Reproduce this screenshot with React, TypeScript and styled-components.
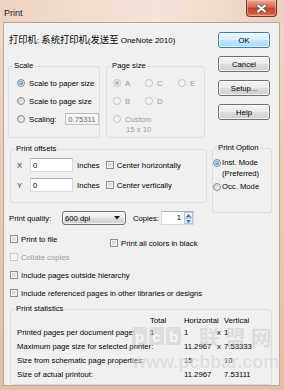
import React from "react";
import styled, { createGlobalStyle } from "styled-components";

const GlobalStyle = createGlobalStyle`
  html, body {
    margin: 0;
    padding: 0;
  }
  body {
    font-family: "Liberation Sans", Arial, "Noto Sans CJK SC", sans-serif;
    font-size: 7.7px;
    color: #000;
    background: #e7c4ad;
  }
`;

const Window = styled.div`
  width: 284px;
  height: 390px;
  display: flex;
  flex-direction: column;
  background: linear-gradient(180deg, #f0d8c8 0%, #ebcbb6 40%, #e5bea4 100%);
  overflow: hidden;
`;

const TitleBar = styled.div`
  height: 22px;
  flex: none;
  display: flex;
  align-items: flex-start;
  justify-content: space-between;
  padding: 0 7px 0 4px;
  background: linear-gradient(90deg, #eed3c2 0%, #f4e4d9 55%, #ecd0be 100%);
`;

const Title = styled.span`
  margin-top: 8px;
  font-size: 9px;
  line-height: 10px;
  color: #1c1c1c;
`;

const CloseButton = styled.div`
  width: 31px;
  height: 17px;
  box-sizing: border-box;
  display: flex;
  align-items: center;
  justify-content: center;
  border: 1px solid #7a3026;
  border-top: none;
  border-radius: 0 0 4px 4px;
  background: linear-gradient(
    180deg,
    #e9a898 0%,
    #d9674f 45%,
    #c3432d 50%,
    #cf533b 80%,
    #e3876b 100%
  );
  box-shadow: inset 0 0 0 1px rgba(255, 210, 200, 0.45);
`;

const Client = styled.div`
  flex: 1;
  margin: 0 4px 4px 3px;
  border: 1px solid #b9a899;
  background: #f0f0f0;
  display: flex;
  flex-direction: column;
`;

const TopRow = styled.div`
  display: flex;
  align-items: flex-start;
`;

const LeftCol = styled.div`
  width: 208px;
  box-sizing: border-box;
  padding: 11px 0 0 5px;
  display: flex;
  flex-direction: column;
`;

const RightCol = styled.div`
  width: 60px;
  padding-top: 9px;
  display: flex;
  flex-direction: column;
  gap: 8px;
`;

const PrinterLine = styled.div`
  line-height: 12px;
  white-space: nowrap;
  font-size: 8px;
`;

const Han = styled.span`
  font-size: 9.3px;
`;

const Group = styled.fieldset<{ $width?: number }>`
  margin: 0;
  padding: 0;
  min-width: 0;
  ${(p) => (p.$width ? `width: ${p.$width}px;` : "")}
  box-sizing: border-box;
  border: 1px solid #d5dfe5;
  border-radius: 3px;
`;

const Legend = styled.legend`
  margin-left: 4px;
  padding: 0 1px;
  line-height: 10px;
`;

const GroupRow = styled.div`
  display: flex;
  gap: 6px;
  margin: 14px 0 0 -1px;
`;

const ScaleBody = styled.div`
  padding: 6px 0 12px 8px;
  display: flex;
  flex-direction: column;
  gap: 6px;
`;

const PageBody = styled.div`
  padding: 6px 0 1px 6px;
`;

const PageGrid = styled.div`
  display: grid;
  grid-template-columns: 32px 33px auto;
  grid-auto-rows: 12px;
  row-gap: 6px;
  margin-bottom: 6px;
`;

const SubNote = styled.div`
  padding-left: 13px;
  line-height: 10px;
  color: #9d9d9d;
`;

const Option = styled.label<{ $disabled?: boolean }>`
  display: flex;
  align-items: center;
  gap: 4px;
  height: 12px;
  white-space: nowrap;
  color: ${(p) => (p.$disabled ? "#9d9d9d" : "#000")};
`;

const RadioMark = styled.span<{ $checked?: boolean; $disabled?: boolean }>`
  flex: none;
  width: 8px;
  height: 8px;
  box-sizing: border-box;
  border-radius: 50%;
  border: 1px solid ${(p) => (p.$disabled ? "#c6c6c6" : "#8b8b8b")};
  background: ${(p) =>
    p.$disabled ? "#f3f3f3" : "linear-gradient(135deg, #cdcdcd, #f8f8f8)"};
  display: inline-flex;
  align-items: center;
  justify-content: center;
  &::after {
    content: "";
    width: 4px;
    height: 4px;
    border-radius: 50%;
    background: ${(p) =>
      !p.$checked
        ? "transparent"
        : p.$disabled
        ? "#b4b4b4"
        : "radial-gradient(circle at 35% 35%, #9ad8ff, #1f6bb0)"};
  }
`;

const CheckMark = styled.span<{ $disabled?: boolean }>`
  flex: none;
  width: 8px;
  height: 8px;
  box-sizing: border-box;
  border: 1px solid ${(p) => (p.$disabled ? "#cacaca" : "#8e8f8f")};
  background: ${(p) =>
    p.$disabled ? "#f5f5f5" : "linear-gradient(135deg, #cbcbcb, #f2f2f2)"};
  box-shadow: inset 0 0 0 1px ${(p) => (p.$disabled ? "#fbfbfb" : "#f4f4f4")};
`;

const CheckItem = styled.label<{ $disabled?: boolean; $drop?: number; $width?: number }>`
  display: flex;
  align-items: center;
  gap: 3px;
  height: 12px;
  flex: none;
  white-space: nowrap;
  margin-top: ${(p) => p.$drop ?? 0}px;
  ${(p) => (p.$width ? `width: ${p.$width}px;` : "")}
  color: ${(p) => (p.$disabled ? "#9d9d9d" : "#000")};
`;

const TextBox = styled.div<{ $width: number; $height: number; $disabled?: boolean }>`
  width: ${(p) => p.$width}px;
  height: ${(p) => p.$height}px;
  box-sizing: border-box;
  flex: none;
  display: flex;
  align-items: center;
  padding: 0 2px;
  border: 1px solid ${(p) => (p.$disabled ? "#c4c4c4" : "#d6dae0")};
  border-top-color: ${(p) => (p.$disabled ? "#b9b9b9" : "#abadb3")};
  background: ${(p) => (p.$disabled ? "#f4f4f4" : "#fff")};
  color: ${(p) => (p.$disabled ? "#6d6d6d" : "#000")};
  overflow: hidden;
`;

const ScalingBox = styled(TextBox)`
  margin-left: 5px;
`;

const OffsetBody = styled.div`
  padding: 4px 0 10px 6px;
  display: flex;
  flex-direction: column;
  gap: 6px;
`;

const OffsetRow = styled.div`
  display: flex;
  align-items: center;
  height: 14px;
`;

const Axis = styled.span`
  width: 13px;
  color: #333;
`;

const Unit = styled.span`
  margin: 0 6px 0 4px;
`;

const QualityRow = styled.div`
  display: flex;
  align-items: center;
  height: 14px;
  margin-top: 8px;
`;

const QualityLabel = styled.span`
  width: 53px;
`;

const Select = styled.div`
  width: 64px;
  height: 14px;
  box-sizing: border-box;
  display: flex;
  align-items: center;
  justify-content: space-between;
  padding: 0 5px 0 2px;
  border: 1px solid #707070;
  border-radius: 3px;
  background: linear-gradient(#f2f2f2, #ebebeb 50%, #dddddd 50%, #cfcfcf);
  box-shadow: inset 0 0 0 1px rgba(255, 255, 255, 0.7);
`;

const CopiesLabel = styled.span`
  margin: 0 2px 0 7px;
`;

const Spin = styled.div`
  width: 33px;
  height: 14px;
  box-sizing: border-box;
  display: flex;
  border: 1px solid #d6dae0;
  border-top-color: #abadb3;
  background: #fff;
`;

const SpinValue = styled.span`
  flex: 1;
  text-align: right;
  line-height: 12px;
  padding-right: 3px;
`;

const SpinArrows = styled.div`
  width: 9px;
  display: flex;
  flex-direction: column;
`;

const SpinButton = styled.div`
  flex: 1;
  display: flex;
  align-items: center;
  justify-content: center;
  border: 1px solid #b5c8d9;
  background: linear-gradient(#f3f8fc, #dce8f3);
`;

const Checks = styled.div`
  margin: 8px 0 0 1px;
  display: flex;
  flex-direction: column;
  gap: 6px;
`;

const CheckLine = styled.div`
  display: flex;
  height: 12px;
`;

const PushButton = styled.button<{ $default?: boolean }>`
  width: 52px;
  height: 16px;
  margin: 0 0 0 6px;
  padding: 0;
  font: 7.7px "Liberation Sans", Arial, sans-serif;
  color: #000;
  border-radius: 3px;
  border: 1px solid ${(p) => (p.$default ? "#3c7fb1" : "#707070")};
  background: ${(p) =>
    p.$default
      ? "linear-gradient(#eaf6fd, #d9f0fc 50%, #bee6fd 50%, #a7d9f5)"
      : "linear-gradient(#f2f2f2, #ebebeb 50%, #dddddd 50%, #cfcfcf)"};
  box-shadow: inset 0 0 0 1px rgba(255, 255, 255, 0.7);
`;

const OptionGroup = styled(Group)`
  margin-top: 15px;
`;

const ModeBody = styled.div`
  padding: 4px 0 20px 0;
  display: flex;
  flex-direction: column;
  gap: 2px;
`;

const ModeOption = styled.label`
  display: flex;
  align-items: flex-start;
  gap: 1px;
  line-height: 11px;
  white-space: nowrap;
  & > span:first-child {
    margin-top: 1.5px;
  }
`;

const ModeText = styled.span`
  text-align: left;
`;

const OffsetGroup = styled(Group)`
  margin: 6px 0 0 1px;
`;

const StatsGroup = styled(Group)`
  margin: 5px 0 0 6px;
`;

const StatsGrid = styled.div`
  position: relative;
  display: grid;
  grid-template-columns: 133px 34px 33px 7px auto;
  grid-template-rows: 12px repeat(4, 14px);
  padding: 0 0 2px 6px;
`;

const Cell = styled.span<{ $head?: boolean; $span?: number }>`
  white-space: nowrap;
  line-height: ${(p) => (p.$head ? "10px" : "14px")};
  align-self: ${(p) => (p.$head ? "end" : "center")};
  ${(p) => (p.$span ? `grid-column: span ${p.$span};` : "")}
`;

const Watermark = styled.div`
  position: absolute;
  left: 121px;
  top: 10px;
  pointer-events: none;
  display: grid;
  grid-template-columns: auto auto;
  column-gap: 15px;
  row-gap: 4px;
  align-items: center;
`;

const TileRow = styled.div`
  display: flex;
  gap: 2px;
`;

const Tile = styled.span`
  width: 15px;
  height: 18px;
  display: flex;
  align-items: center;
  justify-content: center;
  border-radius: 2px;
  background: rgba(200, 200, 200, 0.45);
  color: rgba(250, 250, 250, 0.9);
  font: bold 15px "Liberation Sans", Arial, sans-serif;
`;

const MarkHan = styled.span`
  font: bold 21px "Noto Sans CJK SC", sans-serif;
  line-height: 24px;
  letter-spacing: 5px;
  color: rgba(180, 180, 180, 0.35);
`;

const MarkUrl = styled.span`
  grid-column: span 2;
  font: bold 18px "Liberation Sans", Arial, sans-serif;
  line-height: 20px;
  color: rgba(180, 180, 180, 0.35);
  text-shadow: 0 0 2px rgba(255, 255, 255, 0.6);
`;

const stats: string[][] = [
  ["Printed pages per document page:", "1", "1", "x", "1"],
  ["Maximum page size for selected printer:", "", "11.2967", "x", "7.53333"],
  ["Size from schematic page properties:", "", "15", "", "10"],
  ["Size of actual printout:", "", "11.2967", "", "7.53111"],
];

const Radio = ({
  label,
  checked,
  disabled,
}: {
  label: string;
  checked?: boolean;
  disabled?: boolean;
}) => (
  <Option $disabled={disabled}>
    <RadioMark $checked={checked} $disabled={disabled} />
    {label}
  </Option>
);

const App = () => {
  return (
    <>
      <GlobalStyle />
      <Window>
        <TitleBar>
          <Title>Print</Title>
          <CloseButton>
            <svg width="11" height="9" viewBox="0 0 11 9">
              <path
                d="M2 1.5 L9 7.5 M9 1.5 L2 7.5"
                stroke="#5a5a5a"
                strokeWidth="3.4"
                strokeLinecap="round"
              />
              <path
                d="M2 1.5 L9 7.5 M9 1.5 L2 7.5"
                stroke="#ffffff"
                strokeWidth="2"
                strokeLinecap="round"
              />
            </svg>
          </CloseButton>
        </TitleBar>
        <Client>
          <TopRow>
            <LeftCol>
              <PrinterLine>
                <Han>打印机</Han>: <Han>系统打印机</Han>(<Han>发送至</Han> OneNote 2010)
              </PrinterLine>
              <GroupRow>
                <Group $width={92}>
                  <Legend>Scale</Legend>
                  <ScaleBody>
                    <Radio label="Scale to paper size" checked />
                    <Radio label="Scale to page size" />
                    <Option>
                      <RadioMark />
                      Scaling:
                      <ScalingBox $width={34} $height={12} $disabled>
                        0.75311
                      </ScalingBox>
                    </Option>
                  </ScaleBody>
                </Group>
                <Group $width={99}>
                  <Legend>Page size</Legend>
                  <PageBody>
                    <PageGrid>
                      <Radio label="A" checked disabled />
                      <Radio label="C" disabled />
                      <Radio label="E" disabled />
                      <Radio label="B" disabled />
                      <Radio label="D" disabled />
                    </PageGrid>
                    <Radio label="Custom" disabled />
                    <SubNote>15 x 10</SubNote>
                  </PageBody>
                </Group>
              </GroupRow>
              <OffsetGroup $width={197}>
                <Legend>Print offsets</Legend>
                <OffsetBody>
                  <OffsetRow>
                    <Axis>X</Axis>
                    <TextBox $width={43} $height={14}>
                      0
                    </TextBox>
                    <Unit>Inches</Unit>
                    <CheckItem>
                      <CheckMark />
                      Center horizontally
                    </CheckItem>
                  </OffsetRow>
                  <OffsetRow>
                    <Axis>Y</Axis>
                    <TextBox $width={43} $height={14}>
                      0
                    </TextBox>
                    <Unit>Inches</Unit>
                    <CheckItem>
                      <CheckMark />
                      Center vertically
                    </CheckItem>
                  </OffsetRow>
                </OffsetBody>
              </OffsetGroup>
              <QualityRow>
                <QualityLabel>Print quality:</QualityLabel>
                <Select>
                  <span>600 dpi</span>
                  <svg width="6" height="4" viewBox="0 0 6 4">
                    <polygon points="0,0 6,0 3,3.5" fill="#1a1a1a" />
                  </svg>
                </Select>
                <CopiesLabel>Copies:</CopiesLabel>
                <Spin>
                  <SpinValue>1</SpinValue>
                  <SpinArrows>
                    <SpinButton>
                      <svg width="5" height="3" viewBox="0 0 5 3">
                        <polygon points="0,3 5,3 2.5,0" fill="#4a6f92" />
                      </svg>
                    </SpinButton>
                    <SpinButton>
                      <svg width="5" height="3" viewBox="0 0 5 3">
                        <polygon points="0,0 5,0 2.5,3" fill="#4a6f92" />
                      </svg>
                    </SpinButton>
                  </SpinArrows>
                </Spin>
              </QualityRow>
              <Checks>
                <CheckLine>
                  <CheckItem $width={100}>
                    <CheckMark />
                    Print to file
                  </CheckItem>
                  <CheckItem $drop={4}>
                    <CheckMark />
                    Print all colors in black
                  </CheckItem>
                </CheckLine>
                <CheckItem $disabled>
                  <CheckMark $disabled />
                  Collate copies
                </CheckItem>
                <CheckItem>
                  <CheckMark />
                  Include pages outside hierarchy
                </CheckItem>
                <CheckItem>
                  <CheckMark />
                  Include referenced pages in other libraries or designs
                </CheckItem>
              </Checks>
            </LeftCol>
            <RightCol>
              <PushButton $default>OK</PushButton>
              <PushButton>Cancel</PushButton>
              <PushButton>Setup...</PushButton>
              <PushButton>Help</PushButton>
              <OptionGroup $width={60}>
                <Legend>Print Option</Legend>
                <ModeBody>
                  <ModeOption>
                    <RadioMark $checked />
                    <ModeText>
                      Inst. Mode
                      <br />
                      (Preferred)
                    </ModeText>
                  </ModeOption>
                  <ModeOption>
                    <RadioMark />
                    <ModeText>Occ. Mode</ModeText>
                  </ModeOption>
                </ModeBody>
              </OptionGroup>
            </RightCol>
          </TopRow>
          <StatsGroup $width={262}>
            <Legend>Print statistics</Legend>
            <StatsGrid>
              <Cell $head />
              <Cell $head>Total</Cell>
              <Cell $head $span={2}>
                Horizontal
              </Cell>
              <Cell $head>Vertical</Cell>
              {stats.map((row, i) =>
                row.map((v, j) => <Cell key={`${i}-${j}`}>{v}</Cell>)
              )}
              <Watermark>
                <TileRow>
                  <Tile>p</Tile>
                  <Tile>c</Tile>
                  <Tile>b</Tile>
                </TileRow>
                <MarkHan>联盟网</MarkHan>
                <MarkUrl>www.pcbbar.com</MarkUrl>
              </Watermark>
            </StatsGrid>
          </StatsGroup>
        </Client>
      </Window>
    </>
  );
};

export default App;
